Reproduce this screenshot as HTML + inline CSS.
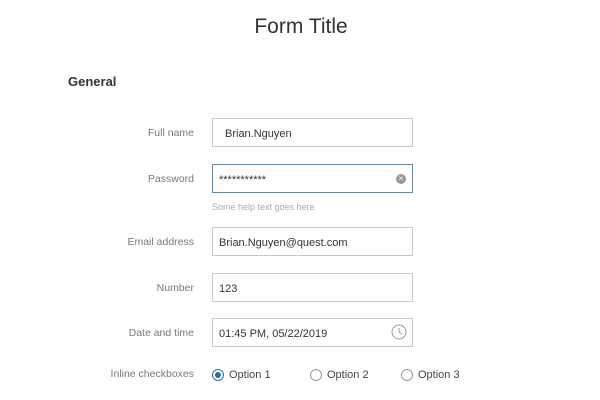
<!DOCTYPE html>
<html><head><style>
body{margin:0;width:600px;height:400px;background:#fff;font-family:"Liberation Sans",sans-serif;position:relative;overflow:hidden}
.a{position:absolute}
h1{position:absolute;top:15px;left:0;width:602px;text-align:center;margin:0;font-weight:normal;font-size:21px;color:#333}
.lbl{position:absolute;right:406px;font-size:10.5px;color:#777;text-align:right;white-space:nowrap}
.in{position:absolute;left:212px;border:1px solid #c8c8c8;font-size:11px;color:#333;line-height:27px;padding-left:6px;padding-top:2px;box-sizing:border-box;width:201px;height:29px}
.r{position:absolute;top:369px;width:10px;height:10px;border:1px solid #999;border-radius:50%}
.rl{position:absolute;top:369px;font-size:11px;color:#444}
</style></head><body>
<h1>Form Title</h1>
<div class="a" style="left:68px;top:74px;font-size:13px;font-weight:bold;color:#333">General</div>

<div class="lbl" style="top:127px">Full name</div>
<div class="in" style="top:118px;padding-left:12px">Brian.Nguyen</div>

<div class="lbl" style="top:173px">Password</div>
<div class="in" style="top:164px;border-color:#4a90c0">***********
<div class="a" style="right:6px;top:9px;width:10px;height:10px;border-radius:50%;background:#999;color:#fff;font-size:8px;line-height:10px;text-align:center">×</div></div>
<div class="a" style="left:212px;top:202px;font-size:9px;color:#aaa">Some help text goes here</div>

<div class="lbl" style="top:236px">Email address</div>
<div class="in" style="top:227px">Brian.Nguyen@quest.com</div>

<div class="lbl" style="top:282px">Number</div>
<div class="in" style="top:273px">123</div>

<div class="lbl" style="top:327px">Date and time</div>
<div class="in" style="top:318px">01:45 PM, 05/22/2019
<svg class="a" style="right:5px;top:5px" width="16" height="16" viewBox="0 0 16 16"><circle cx="8" cy="8" r="7" fill="none" stroke="#999" stroke-width="1"/><path d="M8 4v4l3 2" fill="none" stroke="#999"/></svg></div>

<div class="lbl" style="top:368px">Inline checkboxes</div>
<div class="r" style="left:212px;border-color:#2a6fa8"><div class="a" style="left:2px;top:2px;width:6px;height:6px;border-radius:50%;background:#2a6fa8"></div></div>
<div class="rl" style="left:229px">Option 1</div>
<div class="r" style="left:310px"></div><div class="rl" style="left:327px">Option 2</div>
<div class="r" style="left:401px"></div><div class="rl" style="left:418px">Option 3</div>
</body></html>
